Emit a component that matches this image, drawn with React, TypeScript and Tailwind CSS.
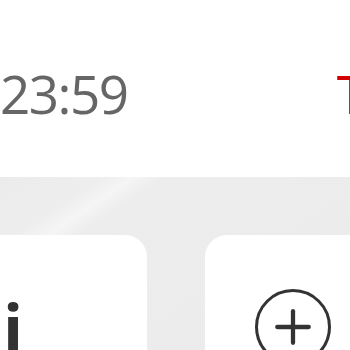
import { Plus } from "lucide-react";

const App = () => {
  return (
    <div className="w-[350px] h-[350px] overflow-hidden bg-white font-['Open_Sans',sans-serif]">
      <header className="h-[177px] flex items-start justify-between pt-[56px] bg-white">
        <span className="text-[53px] font-normal leading-[76px] tracking-[-1.5px] text-[#666666]">
          23:59
        </span>
        <span className="mr-[-16px] text-[53px] font-normal leading-[76px] text-[#d40000]">T</span>
      </header>

      <div className="h-[173px] flex gap-[58px] pt-[58px] bg-[linear-gradient(146deg,#ebebeb_0%,#eeeeee_17%,#f5f5f5_22%,#ededed_27%,#ebebeb_100%)]">
        <section className="ml-[-100px] w-[247px] shrink-0 rounded-t-[22px] bg-white flex items-end">
          <span className="ml-[103px] mb-[-10px] text-[66px] font-bold leading-none text-[#333333]">i</span>
        </section>
        <section className="w-[200px] shrink-0 rounded-t-[22px] bg-white">
          <div className="ml-[50px] mt-[54px] w-[76px] h-[76px] rounded-full border-[3px] border-[#333333] flex items-center justify-center">
            <Plus size={54} strokeWidth={1.9} color="#333333" />
          </div>
        </section>
      </div>
    </div>
  );
};

export default App;
